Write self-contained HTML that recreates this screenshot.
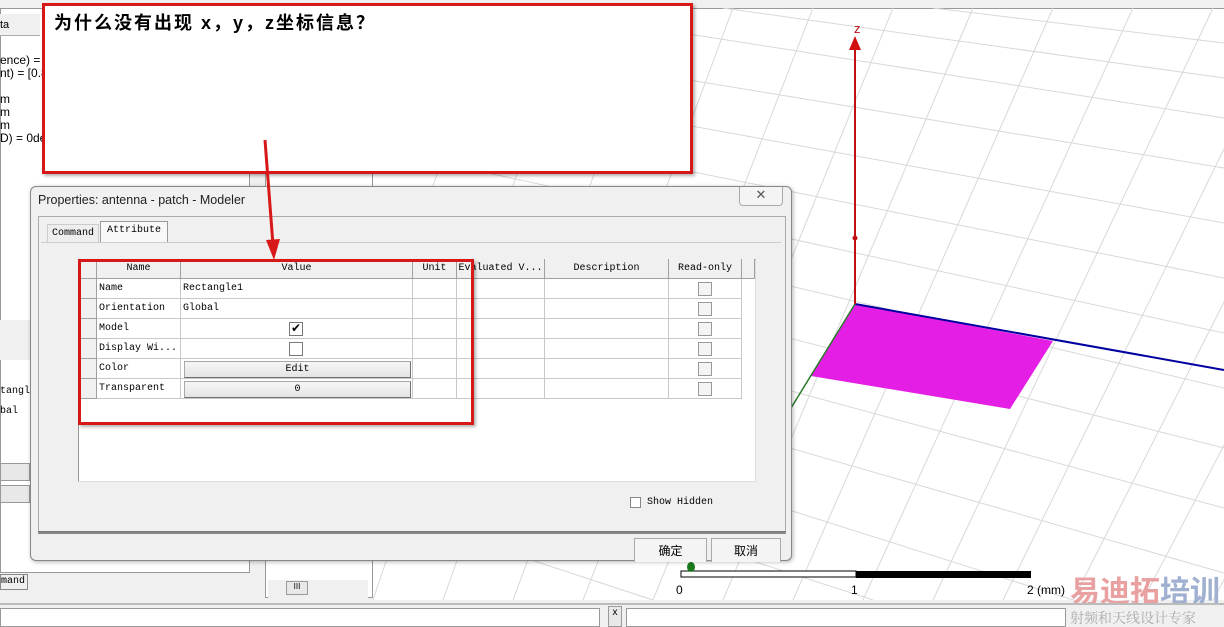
<!DOCTYPE html>
<html><head><meta charset="utf-8"><style>
*{margin:0;padding:0;box-sizing:border-box}
html,body{width:1224px;height:627px;overflow:hidden}
body{background:#f0f0f0;position:relative;font-family:"Liberation Sans","Noto Sans CJK SC",sans-serif;font-size:11px;color:#000}
.a{position:absolute}
.mono{font-family:"Liberation Mono","Noto Sans CJK SC",monospace;font-size:10px}
.cell{position:absolute;border-right:1px solid #c8c8c8;border-bottom:1px solid #c8c8c8;height:20px;line-height:19px;padding-left:2px;white-space:nowrap;overflow:hidden}
.hd{background:#f0f0f0;border-right:1px solid #a0a0a0;border-bottom:1px solid #a0a0a0;text-align:center;padding:0}
.cb{position:absolute;width:14px;height:14px;border:1px solid #999;background:#f4f4f4}
.btn{position:absolute;background:linear-gradient(#f6f6f6,#e4e4e4);border:1px solid #a8a8a8;border-right-color:#707070;border-bottom-color:#707070;text-align:center;line-height:15px;height:17px}
</style></head><body>
<div class="a" style="left:373px;top:8px;width:851px;height:592px;background:#fff;border-top:1px solid #999"></div>
<svg class="a" style="left:373px;top:8px" width="851" height="592">
<g stroke="#d8d8d8" stroke-width="1">
<line x1="0" y1="20" x2="851" y2="160"/><line x1="0" y1="60" x2="851" y2="215"/><line x1="0" y1="100" x2="851" y2="270"/><line x1="0" y1="140" x2="851" y2="325"/><line x1="0" y1="180" x2="851" y2="380"/><line x1="0" y1="225" x2="851" y2="440"/><line x1="0" y1="270" x2="851" y2="500"/><line x1="0" y1="320" x2="851" y2="565"/><line x1="0" y1="370" x2="700" y2="592"/><line x1="0" y1="430" x2="500" y2="592"/><line x1="0" y1="500" x2="280" y2="592"/>
<line x1="150" y1="0" x2="851" y2="110"/><line x1="350" y1="0" x2="851" y2="70"/><line x1="560" y1="0" x2="851" y2="35"/>
<line x1="40" y1="0" x2="-150" y2="592"/><line x1="120" y1="0" x2="-80" y2="592"/><line x1="200" y1="0" x2="0" y2="592"/><line x1="280" y1="0" x2="70" y2="592"/><line x1="360" y1="0" x2="140" y2="592"/><line x1="440" y1="0" x2="210" y2="592"/><line x1="520" y1="0" x2="280" y2="592"/><line x1="600" y1="0" x2="350" y2="592"/><line x1="680" y1="0" x2="420" y2="592"/><line x1="760" y1="0" x2="490" y2="592"/><line x1="840" y1="0" x2="560" y2="592"/><line x1="920" y1="0" x2="630" y2="592"/><line x1="1000" y1="0" x2="700" y2="592"/><line x1="1080" y1="0" x2="770" y2="592"/><line x1="1160" y1="0" x2="840" y2="592"/>
</g>
<polygon points="482,296 680,333 637,401 438,368" fill="#e51ee5"/>
<line x1="482" y1="296" x2="851" y2="362" stroke="#0000a0" stroke-width="2"/>
<line x1="482" y1="296" x2="418" y2="400" stroke="#2a7a2a" stroke-width="1.5"/>
<line x1="482" y1="296" x2="482" y2="40" stroke="#c01010" stroke-width="2"/>
<polygon points="482,28 476,42 488,42" fill="#d01010"/>
<circle cx="482" cy="230" r="2.5" fill="#c01010"/>
<text x="481" y="25" fill="#c01010" font-size="13" font-family="Liberation Sans">z</text>
<rect x="308" y="563" width="175" height="6" fill="#fff" stroke="#000"/>
<rect x="483" y="563" width="175" height="7" fill="#000"/>
<ellipse cx="318" cy="559" rx="4" ry="5" fill="#1a7a1a"/>
<text x="303" y="586" font-size="12" font-family="Liberation Sans">0</text>
<text x="478" y="586" font-size="12" font-family="Liberation Sans">1</text>
<text x="654" y="586" font-size="12" font-family="Liberation Sans">2 (mm)</text>
</svg>
<div class="a" style="left:1070px;top:571px;font-size:30px;font-weight:bold;color:#e8a0a0;letter-spacing:0;white-space:nowrap;font-family:'Noto Sans CJK SC',sans-serif;line-height:36px">易迪拓<span style="color:#a0b0d0">培训</span></div>
<div class="a" style="left:1070px;top:608px;font-size:14px;color:#aaa;white-space:nowrap;font-family:'Noto Serif CJK SC',serif">射频和天线设计专家</div>
<div class="a" style="left:0;top:8px;width:250px;height:565px;background:#fff;border:1px solid #999"></div>
<div class="a" style="left:0;top:14px;width:40px;height:22px;background:#f0f0f0;border-bottom:1px solid #aaa;padding:5px 0 0 0">ta</div>
<div class="a" style="left:0;top:54px;line-height:13px;font-size:12px">ence) = [<br>nt) = [0.8<br><br>m<br>m<br>m<br>D) = 0deg</div>
<div class="a" style="left:0;top:320px;width:250px;height:40px;background:#f0f0f0"></div>
<div class="a mono" style="left:0;top:386px">tangl</div>
<div class="a mono" style="left:0;top:406px">bal</div>
<div class="a" style="left:0;top:463px;width:30px;height:18px;background:#e8e8e8;border:1px solid #999"></div>
<div class="a" style="left:0;top:485px;width:30px;height:18px;background:#e8e8e8;border:1px solid #999"></div>
<div class="a mono" style="left:0;top:574px;width:28px;height:16px;background:#f0f0f0;border:1px solid #888;line-height:14px">mand</div>
<div class="a" style="left:265px;top:8px;width:108px;height:590px;background:#fff;border:1px solid #999"></div>
<div class="a" style="left:268px;top:580px;width:100px;height:18px;background:#f0f0f0"><div class="a" style="left:18px;top:1px;width:22px;height:14px;border:1px solid #999;background:#e8e8e8;font-size:8px;text-align:center">III</div></div>
<div class="a" style="left:0;top:603px;width:1224px;height:2px;background:#bbb"></div>
<div class="a" style="left:0;top:608px;width:600px;height:19px;background:#fff;border:1px solid #999"></div>
<div class="a" style="left:608px;top:606px;width:14px;height:21px;background:#e8e8e8;border:1px solid #999;font-size:10px;text-align:center">x</div>
<div class="a" style="left:626px;top:608px;width:440px;height:19px;background:#fff;border:1px solid #999"></div>
<div class="a" style="left:30px;top:186px;width:762px;height:375px;background:#f0f0f0;border:1px solid #888;border-radius:6px;box-shadow:1px 1px 4px rgba(0,0,0,.3)">
 <div class="a" style="left:7px;top:6px;font-size:12.5px;color:#222">Properties: antenna - patch - Modeler</div>
 <div class="a" style="left:708px;top:0;width:44px;height:19px;border:1px solid #aaa;border-top:0;border-radius:0 0 4px 4px;background:#f4f4f4;text-align:center;color:#555;font-size:13px">✕</div>
 <div class="a" style="left:7px;top:29px;width:748px;height:318px;border:1px solid #aaa;border-bottom:2px solid #888;background:#f0f0f0"></div>
 <div class="a mono" style="left:16px;top:37px;width:52px;height:18px;line-height:18px;border:1px solid #ccc;border-bottom:0;text-align:center;background:#eee">Command</div>
 <div class="a mono" style="left:69px;top:34px;width:68px;height:22px;line-height:18px;border:1px solid #999;border-bottom:0;background:#f8f8f8;text-align:center">Attribute</div>
 <div class="a" style="left:10px;top:55px;width:740px;height:1px;background:#ccc"></div>
 <div class="a" style="left:47px;top:72px;width:678px;height:223px;background:#fff;border:1px solid #999;border-right-color:#ddd;border-bottom-color:#ddd"></div>
 <div class="a" style="left:599px;top:310px;width:11px;height:11px;border:1px solid #888;background:#fff"></div>
 <div class="a mono" style="left:616px;top:310px">Show Hidden</div>
 <div class="a" style="left:7px;top:344px;width:748px;height:1px;background:#777"></div>
 <div class="a" style="left:603px;top:351px;width:73px;height:24px;border:1px solid #aaa;border-bottom:0;background:#f4f4f4;text-align:center;line-height:24px;font-size:12px">确定</div>
 <div class="a" style="left:680px;top:351px;width:70px;height:24px;border:1px solid #aaa;border-bottom:0;background:#f4f4f4;text-align:center;line-height:24px;font-size:12px">取消</div>
</div>
<div class="mono">
<div class="cell hd" style="left:80px;top:259px;width:17px"></div>
<div class="cell hd" style="left:97px;top:259px;width:84px">Name</div>
<div class="cell hd" style="left:181px;top:259px;width:232px">Value</div>
<div class="cell hd" style="left:413px;top:259px;width:44px">Unit</div>
<div class="cell hd" style="left:457px;top:259px;width:88px">Evaluated V...</div>
<div class="cell hd" style="left:545px;top:259px;width:124px">Description</div>
<div class="cell hd" style="left:669px;top:259px;width:73px">Read-only</div>
<div class="cell hd" style="left:742px;top:259px;width:13px"></div>
<div class="cell hd" style="left:80px;top:279px;width:17px"></div><div class="cell" style="left:97px;top:279px;width:84px">Name</div><div class="cell" style="left:181px;top:279px;width:232px">Rectangle1</div><div class="cell" style="left:413px;top:279px;width:44px"></div><div class="cell" style="left:457px;top:279px;width:88px"></div><div class="cell" style="left:545px;top:279px;width:124px"></div><div class="cell" style="left:669px;top:279px;width:73px"></div>
<div class="cell hd" style="left:80px;top:299px;width:17px"></div><div class="cell" style="left:97px;top:299px;width:84px">Orientation</div><div class="cell" style="left:181px;top:299px;width:232px">Global</div><div class="cell" style="left:413px;top:299px;width:44px"></div><div class="cell" style="left:457px;top:299px;width:88px"></div><div class="cell" style="left:545px;top:299px;width:124px"></div><div class="cell" style="left:669px;top:299px;width:73px"></div>
<div class="cell hd" style="left:80px;top:319px;width:17px"></div><div class="cell" style="left:97px;top:319px;width:84px">Model</div><div class="cell" style="left:181px;top:319px;width:232px"></div><div class="cell" style="left:413px;top:319px;width:44px"></div><div class="cell" style="left:457px;top:319px;width:88px"></div><div class="cell" style="left:545px;top:319px;width:124px"></div><div class="cell" style="left:669px;top:319px;width:73px"></div>
<div class="cell hd" style="left:80px;top:339px;width:17px"></div><div class="cell" style="left:97px;top:339px;width:84px">Display Wi...</div><div class="cell" style="left:181px;top:339px;width:232px"></div><div class="cell" style="left:413px;top:339px;width:44px"></div><div class="cell" style="left:457px;top:339px;width:88px"></div><div class="cell" style="left:545px;top:339px;width:124px"></div><div class="cell" style="left:669px;top:339px;width:73px"></div>
<div class="cell hd" style="left:80px;top:359px;width:17px"></div><div class="cell" style="left:97px;top:359px;width:84px">Color</div><div class="cell" style="left:181px;top:359px;width:232px"></div><div class="cell" style="left:413px;top:359px;width:44px"></div><div class="cell" style="left:457px;top:359px;width:88px"></div><div class="cell" style="left:545px;top:359px;width:124px"></div><div class="cell" style="left:669px;top:359px;width:73px"></div>
<div class="cell hd" style="left:80px;top:379px;width:17px"></div><div class="cell" style="left:97px;top:379px;width:84px">Transparent</div><div class="cell" style="left:181px;top:379px;width:232px"></div><div class="cell" style="left:413px;top:379px;width:44px"></div><div class="cell" style="left:457px;top:379px;width:88px"></div><div class="cell" style="left:545px;top:379px;width:124px"></div><div class="cell" style="left:669px;top:379px;width:73px"></div>
<div class="btn" style="left:184px;top:361px;width:227px">Edit</div>
<div class="btn" style="left:184px;top:381px;width:227px">0</div>
<div class="cb" style="left:289px;top:322px;background:#fff;border-color:#777;font-size:12px;line-height:12px;text-align:center">✔</div>
<div class="cb" style="left:289px;top:342px;background:#fff;border-color:#777"></div>
<div class="cb" style="left:698px;top:282px"></div><div class="cb" style="left:698px;top:302px"></div><div class="cb" style="left:698px;top:322px"></div><div class="cb" style="left:698px;top:342px"></div><div class="cb" style="left:698px;top:362px"></div><div class="cb" style="left:698px;top:382px"></div>
</div>
<div class="a" style="left:78px;top:259px;width:396px;height:166px;border:3px solid #d81818;box-shadow:2px 2px 3px rgba(0,0,0,.3)"></div>
<div class="a" style="left:42px;top:3px;width:651px;height:171px;background:#fff;border:3px solid #d81818;box-shadow:2px 2px 3px rgba(0,0,0,.3)"></div>
<div class="a" style="left:54px;top:9px;font-size:18px;font-weight:bold;letter-spacing:2px;white-space:nowrap;font-family:'Liberation Sans','Noto Sans CJK SC',sans-serif">为什么没有出现 x，y，z坐标信息？</div>
<svg class="a" style="left:255px;top:135px" width="30" height="130"><line x1="10" y1="5" x2="18" y2="110" stroke="#d81818" stroke-width="3"/><polygon points="11,105 25,104 19,125" fill="#d81818"/></svg>
</body></html>
